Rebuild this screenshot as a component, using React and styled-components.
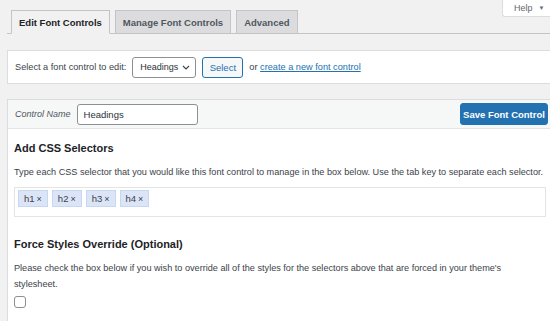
import React from 'react'
import styled, { createGlobalStyle } from 'styled-components'

const GlobalStyle = createGlobalStyle`
  html, body {
    margin: 0;
    padding: 0;
    background: #f1f1f1;
    font-family: "Liberation Sans", Arial, sans-serif;
    color: #3c434a;
  }
  * { box-sizing: border-box; }
`

const tabs = ['Edit Font Controls', 'Manage Font Controls', 'Advanced']
const selectors = ['h1', 'h2', 'h3', 'h4']

function App() {
  return (
    <>
      <GlobalStyle />
      <Page>
        <TabBar>
          <Tabs>
            {tabs.map((t, i) => (
              <Tab key={t} $active={i === 0}>{t}</Tab>
            ))}
          </Tabs>
          <HelpTab>
            Help <HelpArrow>▼</HelpArrow>
          </HelpTab>
        </TabBar>

        <SelectCard>
          <Label>Select a font control to edit:</Label>
          <SelectBox>
            Headings
            <svg width="8" height="5" viewBox="0 0 8 5">
              <path d="M1 1l3 3L7 1" fill="none" stroke="#3c434a" strokeWidth="1.1" />
            </svg>
          </SelectBox>
          <SecondaryButton>Select</SecondaryButton>
          <Label>or <Link>create a new font control</Link></Label>
        </SelectCard>

        <MainCard>
          <CardHeader>
            <FieldLabel>Control Name</FieldLabel>
            <TextInput>Headings</TextInput>
            <PrimaryButton>Save Font Control</PrimaryButton>
          </CardHeader>
          <CardBody>
            <SectionTitle>Add CSS Selectors</SectionTitle>
            <Description>
              Type each CSS selector that you would like this font control to manage in the box below. Use the tab key to separate each selector.
            </Description>
            <TagBox>
              {selectors.map((s) => (
                <TagChip key={s}>{s}<TagClose>×</TagClose></TagChip>
              ))}
            </TagBox>

            <SectionTitle $top={20}>Force Styles Override (Optional)</SectionTitle>
            <Description $wrap={500}>
              Please check the box below if you wish to override all of the styles for the selectors above that are forced in your theme's stylesheet.
            </Description>
            <Checkbox />
          </CardBody>
        </MainCard>
      </Page>
    </>
  )
}

export default App

const Page = styled.div`
  padding-left: 7px;
  width: 550px;
  height: 321px;
  overflow: hidden;
`

const TabBar = styled.div`
  display: flex;
  align-items: flex-start;
  border-bottom: 1px solid #c3c4c7;
  height: 34px;
  padding-left: 4px;
`

const Tabs = styled.div`
  display: flex;
  gap: 5px;
  margin-top: 10px;
`

const Tab = styled.div`
  height: 24px;
  padding: 0 7px;
  display: flex;
  align-items: center;
  font-size: 9.5px;
  font-weight: 700;
  border: 1px solid #c3c4c7;
  border-bottom-color: ${(p) => (p.$active ? '#f1f1f1' : '#c3c4c7')};
  background: ${(p) => (p.$active ? '#f1f1f1' : '#dcdcde')};
  color: ${(p) => (p.$active ? '#1d2327' : '#50575e')};
`

const HelpTab = styled.div`
  margin-left: auto;
  height: 17px;
  width: 48px;
  padding-left: 11px;
  display: flex;
  align-items: center;
  gap: 6px;
  background: #fff;
  border: 1px solid #dcdcde;
  border-top: none;
  border-right: none;
  border-bottom-left-radius: 3px;
  font-size: 9px;
  color: #646970;
`

const HelpArrow = styled.span`
  font-size: 6px;
`

const SelectCard = styled.div`
  margin-top: 16px;
  height: 34px;
  display: flex;
  align-items: center;
  gap: 6px;
  padding: 0 7px;
  background: #fff;
  border: 1px solid #dcdcde;
  border-right: none;
`

const Label = styled.span`
  font-size: 9.2px;
  color: #3c434a;
`

const Link = styled.a`
  color: #2271b1;
  text-decoration: underline;
`

const SelectBox = styled.div`
  width: 64px;
  height: 21px;
  display: flex;
  align-items: center;
  justify-content: space-between;
  padding: 0 5px 0 7px;
  border: 1px solid #8c8f94;
  border-radius: 3px;
  font-size: 9px;
  color: #2c3338;
`

const SecondaryButton = styled.div`
  width: 41px;
  height: 21px;
  display: flex;
  align-items: center;
  justify-content: center;
  border: 1px solid #2271b1;
  border-radius: 3px;
  background: #f6f7f7;
  color: #2271b1;
  font-size: 9.5px;
`

const MainCard = styled.div`
  margin-top: 15px;
  background: #fff;
  border: 1px solid #dcdcde;
  border-right: none;
  height: 240px;
`

const CardHeader = styled.div`
  height: 29px;
  display: flex;
  align-items: center;
  padding: 0 2px 0 7px;
  background: #f6f7f7;
  border-bottom: 1px solid #e4e4e4;
`

const FieldLabel = styled.span`
  font-size: 9px;
  font-style: italic;
  color: #50575e;
`

const TextInput = styled.div`
  margin-left: 6px;
  width: 121px;
  height: 21px;
  display: flex;
  align-items: center;
  padding: 0 6px;
  border: 1px solid #8c8f94;
  border-radius: 3px;
  background: #fff;
  font-size: 9.5px;
  color: #2c3338;
`

const PrimaryButton = styled.div`
  margin-left: auto;
  width: 88px;
  height: 22px;
  display: flex;
  align-items: center;
  justify-content: center;
  background: #2271b1;
  border: 1px solid #2271b1;
  border-radius: 3px;
  color: #fff;
  font-size: 9.5px;
  font-weight: 700;
`

const CardBody = styled.div`
  padding: 0 4px 0 6px;
`

const SectionTitle = styled.h2`
  margin: ${(p) => p.$top || 12}px 0 0;
  font-size: 11px;
  line-height: 14px;
  font-weight: 700;
  color: #1d2327;
`

const Description = styled.p`
  margin: 9px 0 0;
  font-size: 9.15px;
  line-height: 16px;
  color: #3c434a;
  max-width: ${(p) => (p.$wrap ? `${p.$wrap}px` : 'none')};
`

const TagBox = styled.div`
  margin-top: 7px;
  height: 30px;
  display: flex;
  align-items: flex-start;
  gap: 4px;
  padding: 2px 3px;
  border: 1px solid #e4e4e4;
`

const TagChip = styled.div`
  height: 17px;
  display: flex;
  align-items: center;
  gap: 2px;
  padding: 0 5px;
  background: #dbe5f7;
  border: 1px solid #c8d7f0;
  font-size: 9.5px;
  color: #3c434a;
`

const TagClose = styled.span`
  font-size: 9px;
`

const Checkbox = styled.div`
  margin-top: 4px;
  width: 12px;
  height: 12px;
  border: 1px solid #8c8f94;
  border-radius: 3px;
  background: #fff;
`
